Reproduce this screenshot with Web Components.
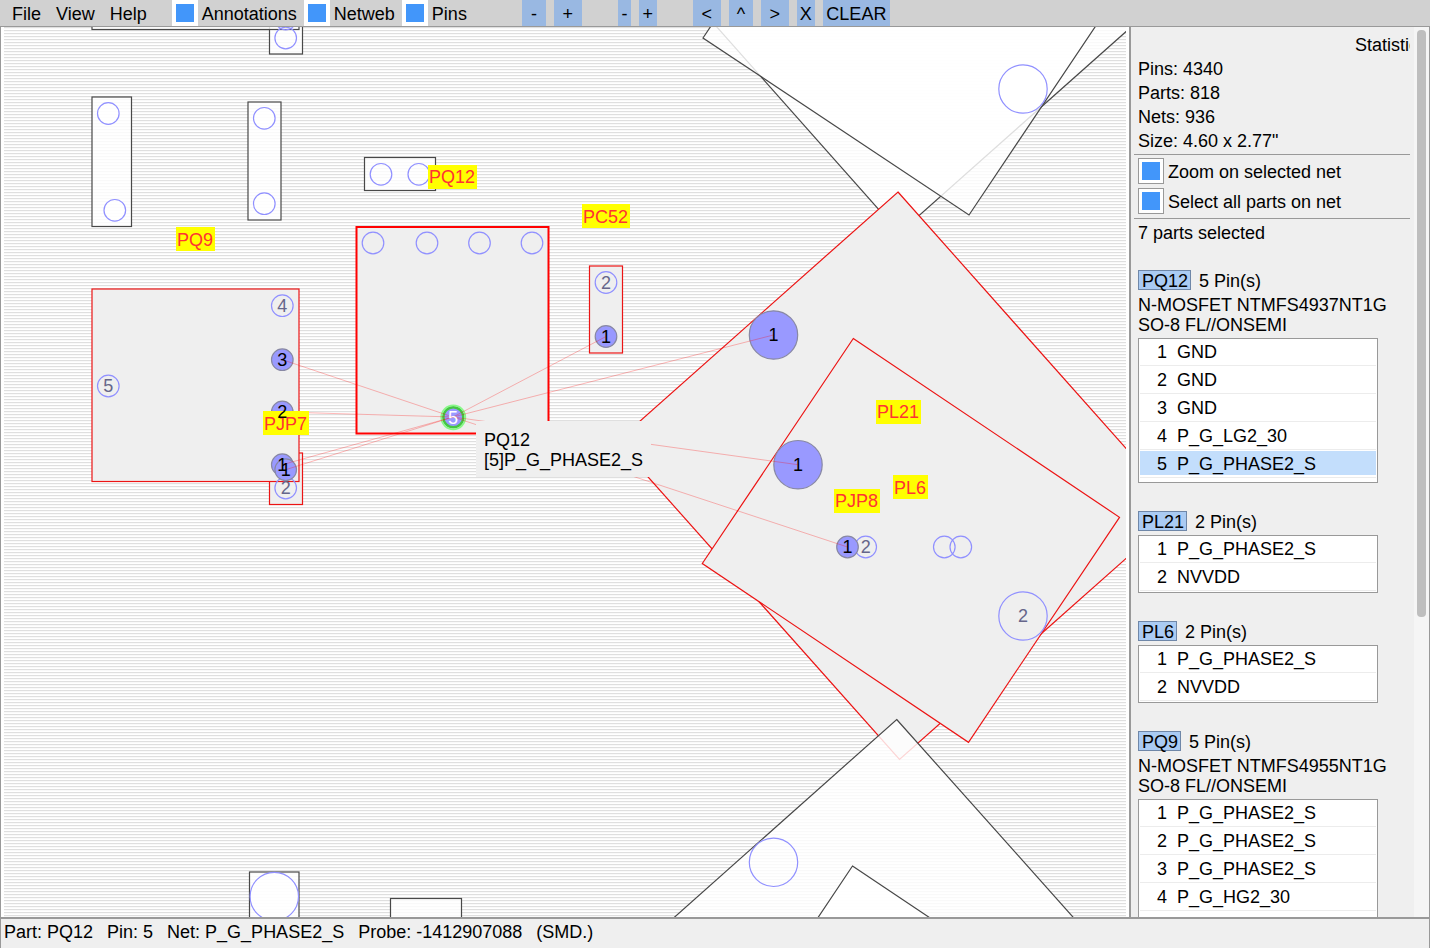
<!DOCTYPE html>
<html lang="en">
<head>
<meta charset="utf-8">
<title>Board viewer</title>
<style>
  html, body { height: 100%; margin: 0; }
  body { font: 18px/24px "Liberation Sans", Arial, sans-serif; color: #000; overflow: hidden; }
</style>
</head>
<body>
<board-app></board-app>

<template id="app-tpl">
  <style>
    :host { display: grid; grid-template: 26px minmax(0, 1fr) 29px / minmax(0, 1fr) 299px; height: 100%; background: #efefef; }
    tool-bar, status-bar { grid-column: 1 / -1; }
  </style>
  <tool-bar></tool-bar>
  <board-view></board-view>
  <side-panel></side-panel>
  <status-bar>
    <span>Part: PQ12</span><span>Pin: 5</span><span>Net: P_G_PHASE2_S</span><span>Probe: -1412907088</span><span>(SMD.)</span>
  </status-bar>
</template>

<template id="toolbar-tpl">
  <style>
    :host { display: flex; background: #d1d1d1; padding-left: 12px; line-height: 28px; }
    nav, .checks, .group { display: flex; }
    nav { gap: 15px; margin-right: 25px; }
    .checks { gap: 7px; margin-right: 55px; }
    .group { gap: 8px; margin-right: 36px; }
    button { font: inherit; color: inherit; border: 0; margin: 0; padding: 0; background: none; }
    .group button { background: #99b8e2; width: 28px; height: 26px; }
    .group .m { width: 24px; }
    .group .s { width: 18px; }
    .group .xs { width: 13px; }
    .group .clear { width: 67px; }
  </style>
  <nav><button>File</button><button>View</button><button>Help</button></nav>
  <div class="checks">
    <check-box>Annotations</check-box>
    <check-box>Netweb</check-box>
    <check-box>Pins</check-box>
  </div>
  <div class="group"><button class="m">-</button><button>+</button></div>
  <div class="group"><button class="xs">-</button><button class="s">+</button></div>
  <div class="group"><button>&lt;</button><button class="m">^</button><button>&gt;</button><button class="s">X</button><button class="clear">CLEAR</button></div>
</template>

<template id="check-tpl">
  <style>
    :host { display: block; height: 26px; line-height: 28px; }
    label { display: flex; gap: 4px; }
    input { appearance: none; box-sizing: border-box; width: 26px; height: 26px; margin: 0; background: #fff; display: grid; place-content: center; }
    :host([framed]) input { border: 1px solid #999; }
    input:checked::before { content: ""; width: 18px; height: 18px; background: #4296fa; }
  </style>
  <label><input type="checkbox" checked><span><slot></slot></span></label>
</template>

<template id="status-tpl">
  <style>
    :host { display: flex; gap: 14px; padding-left: 3px; border: solid #999; border-width: 0 1px; line-height: 27px; white-space: nowrap; }
  </style>
  <slot></slot>
</template>

<template id="panel-tpl">
  <style>
    :host { display: flex; overflow: hidden; border: solid #999; border-width: 1px 1px 2px 0; }
    .content { flex: 1; min-width: 0; overflow: hidden; padding: 6px 0 0 3px; margin-right: 4px; }
    .inner { padding-left: 4px; }
    h2 { font: inherit; margin: 0 0 0 217px; white-space: nowrap; }
    p { margin: 0; }
    hr { border: 0; height: 1px; margin: 0; background: #999; }
    .options { display: grid; gap: 4px; padding: 3px 0 4px 4px; }
    .stats { height: 97px; }
    .count { margin: 2px 0 25px; }
    .parts { display: grid; gap: 28px; }
    .track { width: 15px; background: #f5f5f5; box-sizing: border-box; padding: 3px; }
    .thumb { height: 66.4%; border-radius: 4px; background: #bebebe; }
  </style>
  <div class="content">
    <div class="inner">
      <h2>Statistics</h2>
      <div class="stats"><p>Pins: 4340</p><p>Parts: 818</p><p>Nets: 936</p><p>Size: 4.60 x 2.77"</p></div>
    </div>
    <hr>
    <div class="options">
      <check-box framed>Zoom on selected net</check-box>
      <check-box framed>Select all parts on net</check-box>
    </div>
    <hr>
    <div class="inner">
      <p class="count">7 parts selected</p>
      <div class="parts">
        <part-card name="PQ12" nets="GND,GND,GND,P_G_LG2_30,P_G_PHASE2_S" selected="5">N-MOSFET NTMFS4937NT1G<br>SO-8 FL//ONSEMI</part-card>
        <part-card name="PL21" nets="P_G_PHASE2_S,NVVDD"></part-card>
        <part-card name="PL6" nets="P_G_PHASE2_S,NVVDD"></part-card>
        <part-card name="PQ9" nets="P_G_PHASE2_S,P_G_PHASE2_S,P_G_PHASE2_S,P_G_HG2_30">N-MOSFET NTMFS4955NT1G<br>SO-8 FL//ONSEMI</part-card>
      </div>
    </div>
  </div>
  <div class="track"><div class="thumb"></div></div>
</template>

<template id="card-tpl">
  <style>
    :host { display: block; }
    header { display: flex; gap: 8px; height: 20px; line-height: 22px; margin-bottom: 4px; }
    button { font: inherit; line-height: 20px; color: inherit; margin: 0; padding: 0 2px 0 3px; height: 20px; border: 1px solid #6f87a8; background: #aacbf3; }
    .about { line-height: 20px; padding: 1px 0 3px; white-space: nowrap; }
    table { box-sizing: border-box; width: 240px; border: 1px solid #999; background: #fff; border-spacing: 0; padding: 0 1px; display: block; }
    tbody { display: block; }
    tr { display: flex; height: 28px; line-height: 26px;
      background: linear-gradient(#ececec, #ececec) 0 26px / 100% 1px no-repeat, linear-gradient(var(--mark, #fff), var(--mark, #fff)) 0 0 / 100% 24px no-repeat; }
    tr.on { --mark: #c3defc; }
    td { padding: 0; }
    td:first-child { width: 27px; text-align: right; margin-right: 10px; }
    :host([tall]) table { padding-bottom: 3px; }
    :host(:last-child) table { padding-bottom: 31px; }
  </style>
  <header><button></button><span></span></header>
  <div class="about"><slot></slot></div>
  <table><tbody></tbody></table>
</template>

<template id="view-tpl">
  <style>
    :host { display: block; position: relative; overflow: hidden; background: #fff; border: solid #999; border-width: 1px 2px 2px 1px; padding: 0 3px; }
    svg { display: block; width: 100%; height: 100%; background: repeating-linear-gradient(#dfdfdf 0 1px, #f9f9f9 1px 2px, #fff 2px 3px); font: 18px "Liberation Sans", Arial, sans-serif; }
    .part { fill: #fff; fill-opacity: .82; stroke: #484848; stroke-width: 1.2; }
    .sel { fill: #efefef; fill-opacity: 1; stroke: #ec1414; stroke-width: 1.2; }
    .cur { stroke: #f00; stroke-width: 2; }
    .pin { fill: none; stroke: #9090ff; stroke-width: 1.2; }
    .white { fill: #fff; fill-opacity: .6; }
    .hit { fill: #9999ff; stroke: #8888a4; }
    .web { stroke: #f00; stroke-opacity: .28; }
    .tag { fill: #ff0; }
    .name { fill: #ff3333; }
    .num { text-anchor: middle; fill: #66668a; }
    .num.dark { fill: #000; }
    .num.light { fill: #fff; }
    .tip { position: absolute; left: 475px; top: 394px; padding: 9px 8px 7px; line-height: 20px; background: #efefef; white-space: nowrap; }
  </style>
  <svg role="img" aria-label="Board layout"><g transform="translate(-4 -27)"></g></svg>
  <div class="tip">PQ12<br>[5]P_G_PHASE2_S</div>
</template>

<script>
  class TemplateElement extends HTMLElement {
    constructor() {
      super();
      this.attachShadow({ mode: 'open' })
        .append(document.getElementById(this.constructor.template).content.cloneNode(true));
    }
  }
  const define = (tag, template, base = TemplateElement) => {
    const cls = class extends base {};
    cls.template = template;
    customElements.define(tag, cls);
  };

  class PartCard extends TemplateElement {
    connectedCallback() {
      const root = this.shadowRoot;
      const nets = this.getAttribute('nets').split(',');
      const selected = Number(this.getAttribute('selected'));
      const pins = this.getAttribute('name') === 'PQ9' ? 5 : nets.length;
      root.querySelector('button').textContent = this.getAttribute('name');
      root.querySelector('header span').textContent = pins + ' Pin(s)';
      if (this.textContent.trim()) this.setAttribute('tall', '');
      else root.querySelector('.about').remove();
      root.querySelector('tbody').innerHTML = nets.map((net, i) =>
        `<tr class="${i + 1 === selected ? 'on' : ''}"><td>${i + 1}</td><td>${net}</td></tr>`).join('');
    }
  }

  class BoardView extends TemplateElement {
    connectedCallback() {
      const rect = (cls, x1, y1, x2, y2) => `<rect class="${cls}" x="${x1}" y="${y1}" width="${x2 - x1}" height="${y2 - y1}"/>`;
      const poly = (cls, pts) => `<polygon class="${cls}" points="${pts}"/>`;
      const pin = (cls, x, y, r = 10.8) => `<circle class="pin ${cls}" cx="${x}" cy="${y}" r="${r}"/>`;
      const origin = [453, 417];
      const hits = [[282.3, 359.7, '3'], [282.3, 412, '2'], [282.3, 464.7, '1'], [285.7, 469.7, '1'], [606, 336.5, '1'],
        [773.5, 335, '1', 24.2], [798, 464.7, '1', 24.2], [847.5, 547, '1']];
      const open = [[282.3, 305.7, '4'], [108.3, 386, '5'], [285.7, 488, '2'], [606, 282.5, '2'], [865.7, 547, '2'], [1023, 616, '2', 24.2],
        [944.3, 547, ''], [960.8, 547, ''], [373, 243, ''], [427, 243, ''], [479.5, 243, ''], [532, 243, '']];
      // name, left, top, width, baseline
      const tags = [['PQ12', 428, 165, 49, 183], ['PC52', 582, 204, 48, 223], ['PQ9', 176, 227, 39, 246], ['PJP7', 263, 411, 46, 430],
        ['PL21', 876, 400, 45, 418], ['PL6', 893, 475, 35, 494], ['PJP8', 834, 489, 46, 507]];

      this.shadowRoot.querySelector('g').innerHTML = [
        rect('part', 269.5, 2, 302.5, 54), rect('part', 92, -163, 299, 29.5),
        pin('', 285.7, 38), pin('', 285.7, 19),
        rect('part', 92, 97, 131.5, 226.5), pin('white', 108.3, 113.5), pin('white', 114.8, 210.3),
        rect('part', 248, 102, 281, 220), pin('white', 264.3, 118.3), pin('white', 264.3, 203.7),
        rect('part', 364.5, 157.5, 435.5, 190.5), pin('', 381, 174.3), pin('', 418.8, 174.3),
        poly('part', '898,-335 1180.7,-17 899.5,233 616.7,-86'),
        poly('part', '853,-188 1119.5,-9.5 969,215 703,38'), pin('white', 1023, 89, 24.2),
        rect('sel', 269.5, 453, 302.5, 504.5), rect('sel', 92, 289, 299, 481.5),
        rect('sel cur', 356.5, 227, 548.5, 433.5), rect('sel', 589.5, 266, 622.5, 353),
        poly('sel', '898,192 1180.7,510 899.5,759.5 616.7,441.7'),
        poly('sel', '853.3,338.5 1119.5,517.3 968.5,742.3 702.3,563.5'),
        poly('part', '896.7,719.5 1180,1037 899,1287 615.7,969.5'),
        poly('part', '852.5,866 1119,1044.5 968,1269 702,1091'), pin('', 773.5, 862.3, 24.2),
        rect('part', 249.5, 872, 299, 925), pin('white', 274.3, 896.5, 24.2), rect('part', 390.5, 898.5, 461.5, 925),
        ...open.map(([x, y, , r]) => pin('', x, y, r)),
        ...hits.map(([x, y, , r]) => pin('hit', x, y, r)),
        `<circle cx="453.3" cy="417.3" r="10" fill="#9999ff" stroke="#44c544" stroke-width="2.5"/>`,
        `<circle cx="453.3" cy="417.3" r="12" fill="none" stroke="#88f888" stroke-width="1.8"/>`,
        ...hits.map(([x, y]) => `<line class="web" x1="${origin[0]}" y1="${origin[1]}" x2="${x}" y2="${y}"/>`),
        ...tags.map(([name, x, y, w, base]) => `<rect class="tag" x="${x}" y="${y}" width="${w}" height="24"/><text class="name" x="${x + 1}" y="${base}">${name}</text>`),
        ...open.filter(p => p[2]).map(([x, y, n]) => `<text class="num" x="${x}" y="${Math.round(y + 6)}">${n}</text>`),
        ...hits.map(([x, y, n]) => `<text class="num dark" x="${x}" y="${Math.round(y + 6)}">${n}</text>`),
        `<text class="num light" x="453" y="424">5</text>`
      ].join('');
    }
  }

  define('check-box', 'check-tpl');
  define('tool-bar', 'toolbar-tpl');
  define('status-bar', 'status-tpl');
  define('part-card', 'card-tpl', PartCard);
  define('side-panel', 'panel-tpl');
  define('board-view', 'view-tpl', BoardView);
  define('board-app', 'app-tpl');
</script>
</body>
</html>
